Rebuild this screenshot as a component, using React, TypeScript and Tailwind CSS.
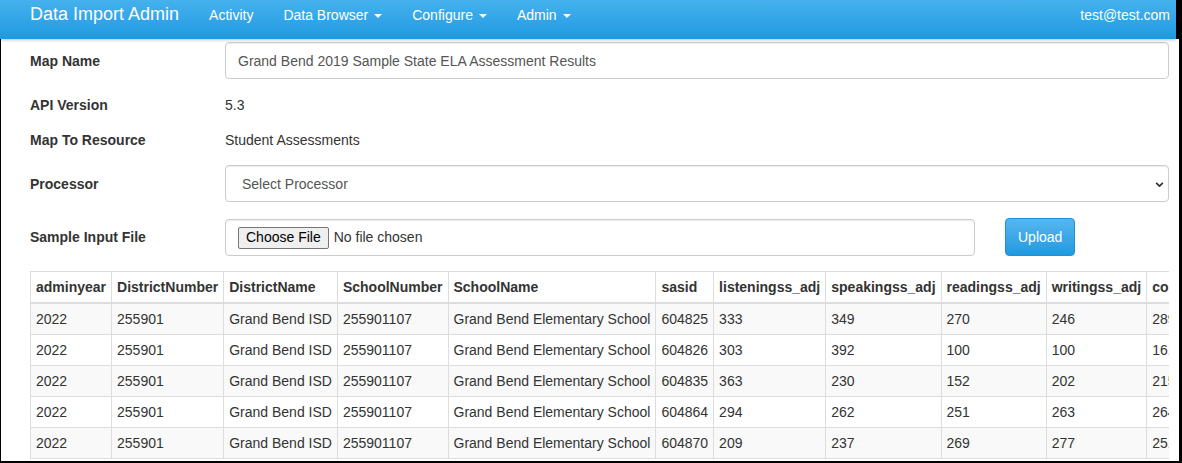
import React from "react";

const columns = [
  "adminyear",
  "DistrictNumber",
  "DistrictName",
  "SchoolNumber",
  "SchoolName",
  "sasid",
  "listeningss_adj",
  "speakingss_adj",
  "readingss_adj",
  "writingss_adj",
  "comprehensionss_adj",
  "oralss_adj",
  "literacyss_adj",
  "overallss_adj",
];

const scores = [
  ["604825", "333", "349", "270", "246", "289", "341", "258", "297"],
  ["604826", "303", "392", "100", "100", "161", "348", "100", "224"],
  ["604835", "363", "230", "152", "202", "215", "297", "177", "237"],
  ["604864", "294", "262", "251", "263", "264", "278", "257", "268"],
  ["604870", "209", "237", "269", "277", "251", "223", "273", "248"],
];

const rows = scores.map((s) => [
  "2022",
  "255901",
  "Grand Bend ISD",
  "255901107",
  "Grand Bend Elementary School",
  ...s,
]);

function Caret() {
  return (
    <span className="inline-block w-0 h-0 ml-[6px] align-middle border-t-[4px] border-t-white border-x-[4px] border-x-transparent" />
  );
}

function NavBar() {
  return (
    <nav className="relative z-10 flex h-[39px] w-[1176px] bg-gradient-to-b from-[#45b1ed] to-[#1b9ae2] text-white shadow-[0_1px_3px_rgba(0,0,0,0.25)]">
      <div className="flex pl-[30px]">
        <a className="pt-[4px] pr-[15px] text-[18px] leading-[20px]">Data Import Admin</a>
        <ul className="flex text-[14px] leading-[20px]">
          <li className="px-[15px] pt-[5px]">Activity</li>
          <li className="px-[15px] pt-[5px]">
            Data Browser
            <Caret />
          </li>
          <li className="px-[15px] pt-[5px]">
            Configure
            <Caret />
          </li>
          <li className="px-[15px] pt-[5px]">
            Admin
            <Caret />
          </li>
        </ul>
      </div>
      <div className="ml-auto pr-[6px] pt-[5px] text-[14px] leading-[20px]">test@test.com</div>
    </nav>
  );
}

function Label({ children }: { children: React.ReactNode }) {
  return (
    <div className="w-[195px] shrink-0 font-bold text-[14px] leading-[20px] text-[#333]">
      {children}
    </div>
  );
}

export default function App() {
  return (
    <div className="w-[1182px] h-[463px] bg-black overflow-hidden font-['Liberation_Sans',Arial,sans-serif]">
      <NavBar />
      <main className="ml-[1px] w-[1178px] h-[422px] bg-white pl-[29px] pt-[3px] text-[14px] text-[#333]">
        <div className="flex items-center">
          <Label>Map Name</Label>
          <div className="flex items-center w-[944px] h-[37px] px-[12px] pt-[1px] border border-[#ccc] rounded-[4px] shadow-[inset_0_1px_1px_rgba(0,0,0,0.075)] text-[#555]">
            Grand Bend 2019 Sample State ELA Assessment Results
          </div>
        </div>

        <div className="flex items-center mt-[16px]">
          <Label>API Version</Label>
          <div className="leading-[20px]">5.3</div>
        </div>

        <div className="flex items-center mt-[15px]">
          <Label>Map To Resource</Label>
          <div className="leading-[20px]">Student Assessments</div>
        </div>

        <div className="flex items-center mt-[15px]">
          <Label>Processor</Label>
          <div className="flex items-center w-[944px] h-[37px] pl-[16px] pr-[12px] pt-[1px] border border-[#ccc] rounded-[4px] shadow-[inset_0_1px_1px_rgba(0,0,0,0.075)] text-[#555]">
            Select Processor
            <svg viewBox="0 0 10 6" className="ml-auto mr-[-8px] w-[9px] h-[5px]" fill="none" stroke="#333" strokeWidth={2}>
              <path d="M1 1l4 4 4-4" />
            </svg>
          </div>
        </div>

        <div className="flex items-center mt-[16px]">
          <Label>Sample Input File</Label>
          <div className="flex items-center w-[750px] h-[37px] pl-[12px] pt-[1px] border border-[#ccc] rounded-[4px] shadow-[inset_0_1px_1px_rgba(0,0,0,0.075)]">
            <span className="flex items-center h-[22px] px-[7px] bg-[#efefef] border border-[#767676] rounded-[2px] text-black">
              Choose File
            </span>
            <span className="ml-[5px] text-[#333]">No file chosen</span>
          </div>
          <button className="ml-[30px] h-[38px] px-[12px] rounded-[4px] border border-[#1d90d6] bg-gradient-to-b from-[#55b6ee] to-[#1d9ae1] text-white">
            Upload
          </button>
        </div>

        <div className="mt-[15px] w-[1139px] overflow-hidden">
          <table className="border-collapse border border-[#ddd] text-[14px] leading-[20px] text-[#333]">
            <thead>
              <tr>
                {columns.map((c) => (
                  <th key={c} className="px-[5px] py-[5px] border border-[#ddd] border-b-2 text-left font-bold whitespace-nowrap">
                    {c}
                  </th>
                ))}
              </tr>
            </thead>
            <tbody>
              {rows.map((r, i) => (
                <tr key={i} className={i % 2 === 0 ? "bg-[#f9f9f9]" : "bg-white"}>
                  {r.map((v, j) => (
                    <td key={j} className="px-[5px] py-[5px] border border-[#ddd] whitespace-nowrap">
                      {v}
                    </td>
                  ))}
                </tr>
              ))}
            </tbody>
          </table>
        </div>
      </main>
    </div>
  );
}
